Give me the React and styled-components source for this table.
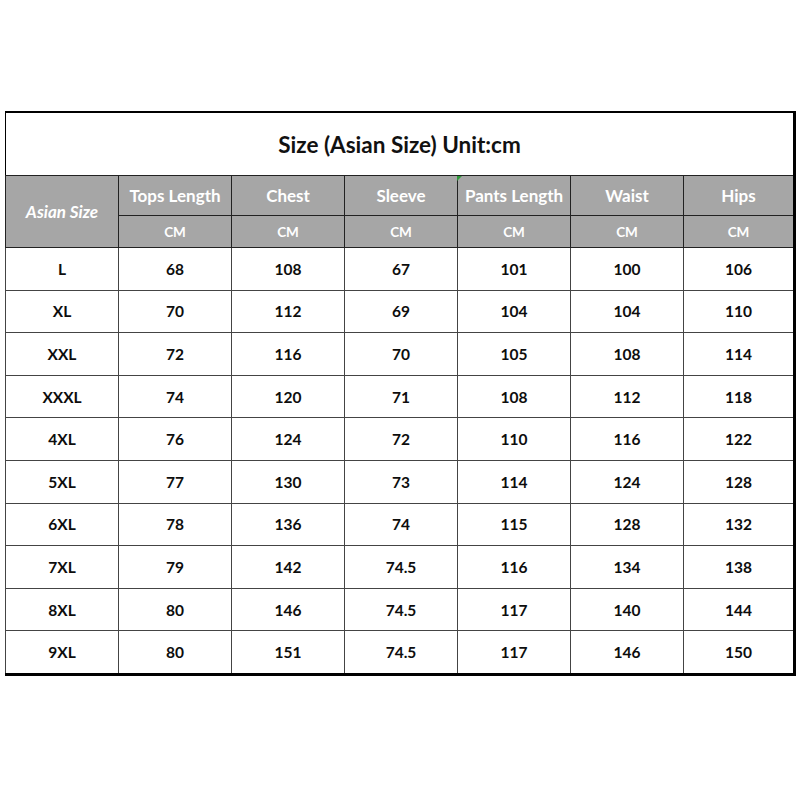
import React from "react";
import styled, { createGlobalStyle } from "styled-components";

const GlobalStyle = createGlobalStyle`
	html, body {
		margin: 0;
		padding: 0;
		background: #ffffff;
	}
	body {
		font-family: Lato, "Liberation Sans", sans-serif;
	}
`;

const Page = styled.div`
	width: 800px;
	height: 800px;
	padding: 111px 0 0 5px;
	box-sizing: border-box;
`;

const Table = styled.table`
	width: 789px;
	table-layout: fixed;
	border-collapse: collapse;
	border-top: 2px solid #000;
	border-left: 1px solid #000;
	border-right: 3px solid #000;
	border-bottom: 3px solid #000;
`;

const TitleCell = styled.th`
	height: 62px;
	font-size: 22.5px;
	font-weight: 700;
	color: #111;
	text-align: center;
	vertical-align: middle;
	padding: 0;
	border-bottom: 1px solid #222;
`;

const HeadCell = styled.th`
	position: relative;
	height: ${(p) => (p.$sub ? "31px" : "39px")};
	background: #a6a6a6;
	color: #ffffff;
	font-size: ${(p) => (p.$sub ? "13.5px" : "17px")};
	font-weight: 700;
	font-style: ${(p) => (p.$italic ? "italic" : "normal")};
	text-align: center;
	vertical-align: middle;
	padding: 0;
	border: 1px solid #222;
	border-left-color: ${(p) => (p.$soft ? "#8f8f8f" : "#222")};
	white-space: nowrap;
`;

const Marker = styled.span`
	position: absolute;
	left: -1px;
	top: 0;
	width: 0;
	height: 0;
	border-top: 5px solid #2e9a3a;
	border-right: 5px solid transparent;
`;

const Cell = styled.td`
	height: 41.6px;
	font-size: 15.5px;
	font-weight: 700;
	color: #0d0d0d;
	text-align: center;
	vertical-align: middle;
	padding: 0;
	border: 1px solid #444;
`;

const columns = ["Tops Length", "Chest", "Sleeve", "Pants Length", "Waist", "Hips"];

const rows = [
	["L", 68, 108, 67, 101, 100, 106],
	["XL", 70, 112, 69, 104, 104, 110],
	["XXL", 72, 116, 70, 105, 108, 114],
	["XXXL", 74, 120, 71, 108, 112, 118],
	["4XL", 76, 124, 72, 110, 116, 122],
	["5XL", 77, 130, 73, 114, 124, 128],
	["6XL", 78, 136, 74, 115, 128, 132],
	["7XL", 79, 142, "74.5", 116, 134, 138],
	["8XL", 80, 146, "74.5", 117, 140, 144],
	["9XL", 80, 151, "74.5", 117, 146, 150],
];

const App = () => {
	return (
		<Page>
			<GlobalStyle />
			<Table>
				<colgroup>
					<col style={{ width: 113 }} />
					{columns.map((c, i) => (
						<col key={c} style={{ width: i === 5 ? 111 : 113 }} />
					))}
				</colgroup>
				<thead>
					<tr>
						<TitleCell colSpan={7}>Size (Asian Size) Unit:cm</TitleCell>
					</tr>
					<tr>
						<HeadCell rowSpan={2} $italic>
							Asian Size
						</HeadCell>
						{columns.map((c, i) => (
							<HeadCell key={c} $soft={i === 0}>
								{c === "Pants Length" && <Marker />}
								{c}
							</HeadCell>
						))}
					</tr>
					<tr>
						{columns.map((c, i) => (
							<HeadCell key={c} $sub $soft={i === 0}>
								CM
							</HeadCell>
						))}
					</tr>
				</thead>
				<tbody>
					{rows.map((r) => (
						<tr key={r[0]}>
							{r.map((v, i) => (
								<Cell key={i}>{v}</Cell>
							))}
						</tr>
					))}
				</tbody>
			</Table>
		</Page>
	);
};

export default App;
